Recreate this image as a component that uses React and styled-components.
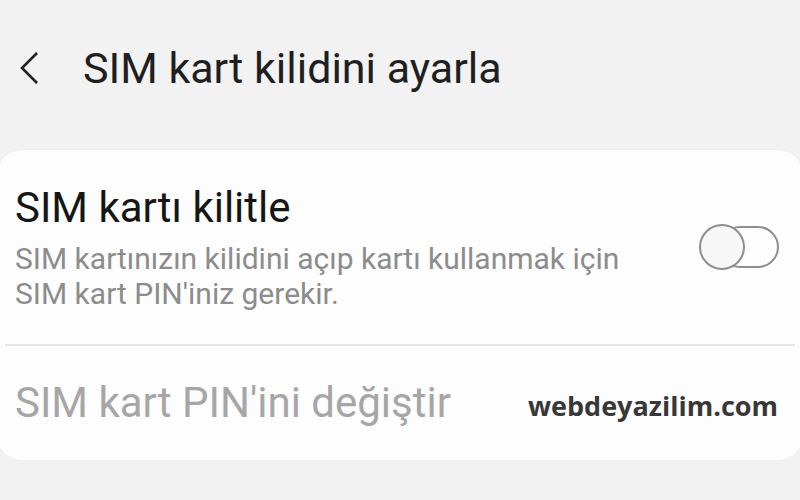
import React from 'react'
import styled, { createGlobalStyle } from 'styled-components'

const Global = createGlobalStyle`
  html, body {
    margin: 0;
    padding: 0;
    background: #f2f2f2;
    font-family: Roboto, "Noto Sans", sans-serif;
  }
`

const Page = styled.div`
  width: 800px;
  height: 500px;
  overflow: hidden;
  background: #f2f2f2;
`

const Header = styled.div`
  display: flex;
  align-items: center;
  height: 136px;
  padding-left: 18px;
  box-sizing: border-box;
`

const BackButton = styled.div`
  width: 28px;
  height: 40px;
  display: flex;
  align-items: center;
  margin-right: 37px;
`

const Title = styled.h1`
  margin: 0;
  font-size: 43px;
  font-weight: 400;
  color: #1f1f1f;
`

const Card = styled.div`
  margin: 14px -4px 0 -4px;
  background: #fdfdfd;
  border-radius: 26px;
  box-shadow: 0 0 2px rgba(0, 0, 0, 0.06);
  padding: 0 9px;
`

const Row = styled.div`
  display: flex;
  align-items: center;
  justify-content: space-between;
  height: ${p => p.$h}px;
  box-sizing: border-box;
  padding: 0 10px;
  border-bottom: ${p => (p.$divider ? '2px solid #e6e6e6' : 'none')};
`

const TextBlock = styled.div`
  display: flex;
  flex-direction: column;
`

const RowTitle = styled.div`
  font-size: 42px;
  color: ${p => (p.$disabled ? '#a6a6a6' : '#161616')};
  line-height: 1.2;
`

const RowDesc = styled.div`
  font-size: 30px;
  color: #8c8c8c;
  line-height: 35px;
  margin-top: 8px;
`

const Toggle = styled.div`
  position: relative;
  width: 80px;
  height: 46px;
  margin-right: 6px;
`

const Track = styled.div`
  position: absolute;
  left: 20px;
  top: 2px;
  width: 60px;
  height: 42px;
  border: 2px solid #8e8e8e;
  border-radius: 21px;
  box-sizing: border-box;
`

const Knob = styled.div`
  position: absolute;
  left: 0;
  top: 0;
  width: 46px;
  height: 46px;
  border: 2px solid #8e8e8e;
  border-radius: 50%;
  background: #f7f7f7;
  box-sizing: border-box;
`

const Watermark = styled.div`
  font-family: "Open Sans", Lato, sans-serif;
  font-weight: 700;
  font-size: 27px;
  color: #383838;
  margin-right: 7px;
  margin-top: 4px;
`

export default function App() {
  return (
    <Page>
      <Global />
      <Header>
        <BackButton>
          <svg width="22" height="34" viewBox="0 0 22 34">
            <path d="M19 2 L4 17 L19 32" fill="none" stroke="#222" strokeWidth="2.6" />
          </svg>
        </BackButton>
        <Title>SIM kart kilidini ayarla</Title>
      </Header>
      <Card>
        <Row $h={196} $divider>
          <TextBlock>
            <RowTitle>SIM kartı kilitle</RowTitle>
            <RowDesc>
              SIM kartınızın kilidini açıp kartı kullanmak için
              <br />
              SIM kart PIN'iniz gerekir.
            </RowDesc>
          </TextBlock>
          <Toggle>
            <Track />
            <Knob />
          </Toggle>
        </Row>
        <Row $h={114}>
          <RowTitle $disabled>SIM kart PIN'ini değiştir</RowTitle>
          <Watermark>webdeyazilim.com</Watermark>
        </Row>
      </Card>
    </Page>
  )
}
